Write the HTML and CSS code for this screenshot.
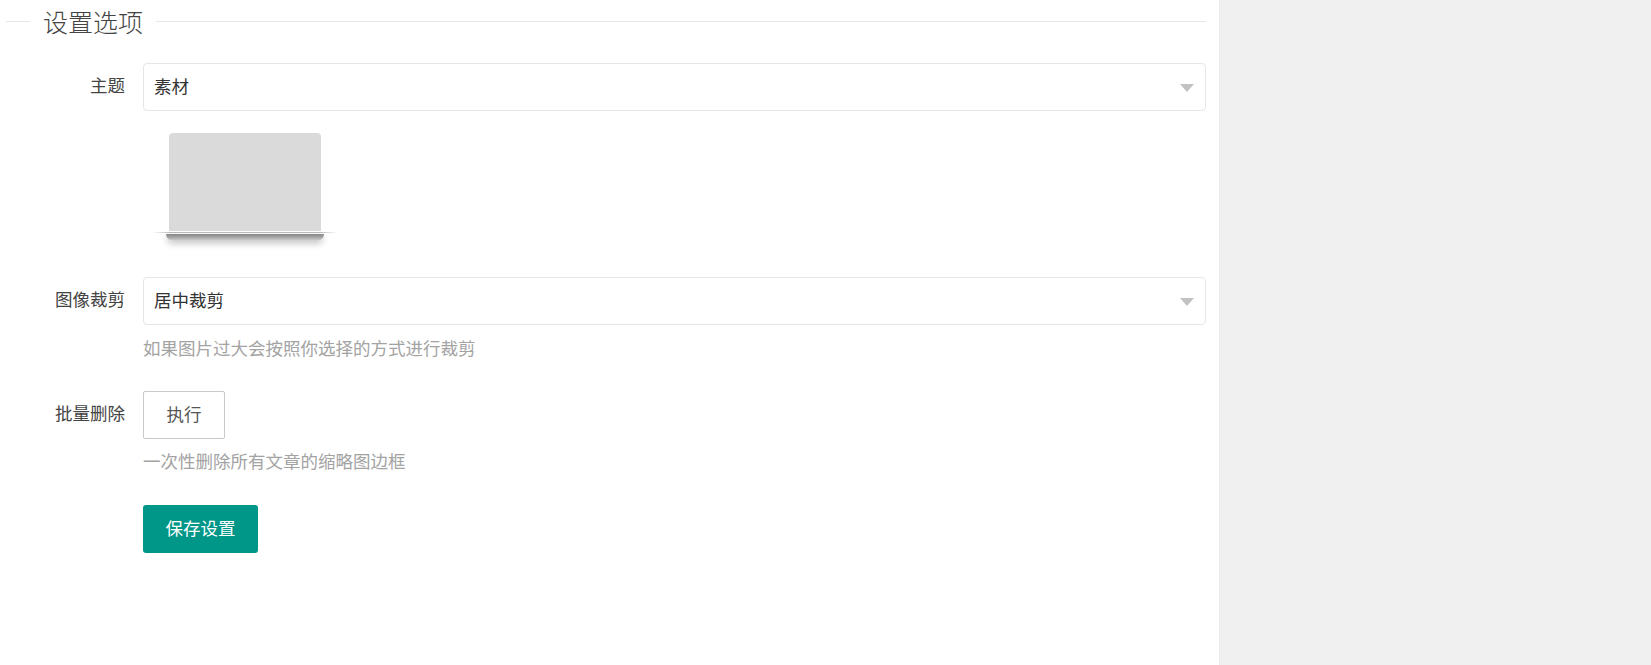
FILE: index.html
```html
<!DOCTYPE html>
<html lang="zh">
<head>
    <meta charset="UTF-8">
    <title>设置选项</title>
    <link rel="stylesheet" href="styles.css">
</head>
<body>
    <div class="page">
        <div class="main">
            <!-- 标题 -->
            <fieldset class="field-title">
                <legend>设置选项</legend>
            </fieldset>

            <!-- 主题 -->
            <div class="form-item theme-item">
                <label class="form-label">主题</label>
                <div class="form-block">
                    <div class="select">素材</div>
                    <div class="laptop">
                        <div class="laptop-screen"></div>
                        <div class="laptop-base"></div>
                        <div class="laptop-shadow"></div>
                    </div>
                </div>
            </div>

            <!-- 图像裁剪 -->
            <div class="form-item crop-item">
                <label class="form-label">图像裁剪</label>
                <div class="form-block">
                    <div class="select">居中裁剪</div>
                    <div class="form-aux">如果图片过大会按照你选择的方式进行裁剪</div>
                </div>
            </div>

            <!-- 批量删除 -->
            <div class="form-item delete-item">
                <label class="form-label">批量删除</label>
                <div class="form-block">
                    <button class="btn">执行</button>
                    <div class="form-aux aux-tight">一次性删除所有文章的缩略图边框</div>
                </div>
            </div>

            <div class="form-item">
                <div class="form-label"></div>
                <div class="form-block">
                    <button class="btn btn-save">保存设置</button>
                </div>
            </div>
        </div>
        <div class="side"></div>
    </div>
</body>
</html>
```

FILE: styles.css
```css
/* 全局样式 */
html, body {
    margin: 0;
    padding: 0;
    height: 100%;
}

body {
    font-family: "Noto Sans CJK SC", "Liberation Sans", sans-serif;
    font-size: 17.5px;
    color: #444;
    background-color: #fff;
}

.page {
    display: flex;
    height: 665px;
    overflow: hidden;
}

.main {
    width: 1220px;
    box-sizing: border-box;
    padding: 0 13px 0 6px;
    background-color: #fff;
    border-right: 1px solid #ececec;
}

.side {
    flex: 1;
    background-color: #f0f0f0;
}

/* 标题 */
.field-title {
    margin: 6px 0 21px;
    padding: 0;
    height: 35px;
    border: none;
    border-top: 1px solid #e6e6e6;
}

.field-title legend {
    margin-left: 24px;
    padding: 0 13px;
    font-size: 25px;
    font-weight: 300;
    line-height: 30px;
    color: #444;
}

/* 表单 */
.form-item {
    display: flex;
}

.form-label {
    width: 119px;
    margin-right: 18px;
    text-align: right;
    line-height: 44px;
}

.form-block {
    flex: 1;
}

.theme-item {
    margin-bottom: 36px;
}

.crop-item {
    margin-bottom: 30px;
}

.delete-item {
    margin-bottom: 31px;
}

.select {
    position: relative;
    height: 48px;
    box-sizing: border-box;
    padding-left: 10px;
    line-height: 44px;
    color: #333;
    border: 1px solid #e6e6e6;
    border-radius: 4px;
}

.select:after {
    content: '';
    position: absolute;
    top: 20px;
    right: 11px;
    border-style: solid;
    border-width: 8px 7.5px 0;
    border-color: #c2c2c2 transparent transparent;
}

.form-aux {
    margin-top: 9px;
    line-height: 27px;
    color: #a3a3a3;
}

.aux-tight {
    margin-top: 8px;
}

.btn {
    display: block;
    width: 82px;
    height: 48px;
    padding: 0 0 3px;
    font-family: inherit;
    font-size: 17.5px;
    color: #555;
    background-color: #fff;
    border: 1px solid #c9c9c9;
    border-radius: 2px;
}

.btn-save {
    width: 115px;
    color: #fff;
    background-color: #009688;
    border: none;
    border-radius: 3px;
}

/* 笔记本预览图 */
.laptop {
    width: 186px;
    margin: 22px 0 0 9px;
}

.laptop-screen {
    width: 152px;
    height: 98px;
    margin: 0 auto;
    background-color: #dadada;
    border-radius: 4px 4px 0 0;
}

.laptop-base {
    height: 1px;
    margin-top: 1px;
    background: linear-gradient(to right, #fff, #bbb 10%, #bbb 90%, #fff);
}

.laptop-shadow {
    height: 7px;
    margin: 1px 14px 0;
    background: linear-gradient(to bottom, #858585, #a8a8a8 50%, #d8d8d8);
    box-shadow: 0 3px 6px rgba(0, 0, 0, 0.22);
    border-radius: 0 0 12px 12px;
}
```
